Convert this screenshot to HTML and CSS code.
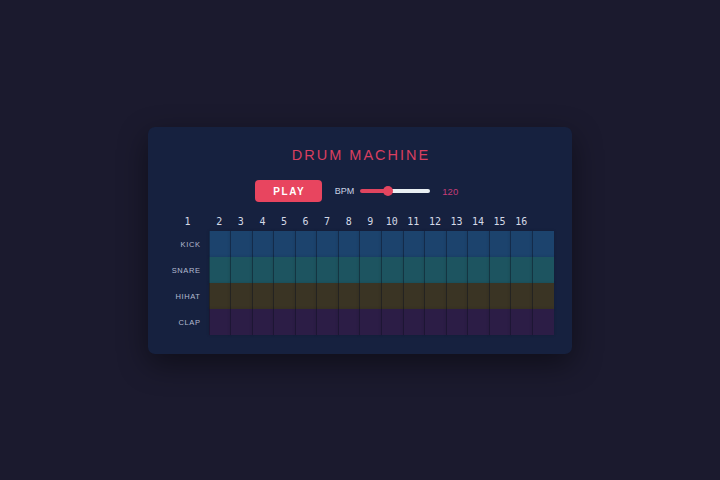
FILE: index.html
```html
<!DOCTYPE html>
<html>
<head>
<meta charset="utf-8">
<link rel="stylesheet" href="styles.css">
</head>
<body>
<div class="card">
  <h1 class="title">DRUM MACHINE</h1>
  <div class="controls">
    <button class="play">PLAY</button>
    <span class="bpm-label">BPM</span>
    <div class="slider">
      <div class="fill"></div>
      <div class="thumb"></div>
      <div class="rest"></div>
    </div>
    <span class="bpm-value">120</span>
  </div>
  <div class="grid" id="grid">
    <div class="num">1</div><div class="num">2</div><div class="num">3</div><div class="num">4</div><div class="num">5</div><div class="num">6</div><div class="num">7</div><div class="num">8</div><div class="num">9</div><div class="num">10</div><div class="num">11</div><div class="num">12</div><div class="num">13</div><div class="num">14</div><div class="num">15</div><div class="num">16</div><div class="num"></div>
    <div class="label">KICK</div>
    <div class="cell kick"></div><div class="cell kick"></div><div class="cell kick"></div><div class="cell kick"></div><div class="cell kick"></div><div class="cell kick"></div><div class="cell kick"></div><div class="cell kick"></div><div class="cell kick"></div><div class="cell kick"></div><div class="cell kick"></div><div class="cell kick"></div><div class="cell kick"></div><div class="cell kick"></div><div class="cell kick"></div><div class="cell kick"></div>
    <div class="label">SNARE</div>
    <div class="cell snare"></div><div class="cell snare"></div><div class="cell snare"></div><div class="cell snare"></div><div class="cell snare"></div><div class="cell snare"></div><div class="cell snare"></div><div class="cell snare"></div><div class="cell snare"></div><div class="cell snare"></div><div class="cell snare"></div><div class="cell snare"></div><div class="cell snare"></div><div class="cell snare"></div><div class="cell snare"></div><div class="cell snare"></div>
    <div class="label">HIHAT</div>
    <div class="cell hihat"></div><div class="cell hihat"></div><div class="cell hihat"></div><div class="cell hihat"></div><div class="cell hihat"></div><div class="cell hihat"></div><div class="cell hihat"></div><div class="cell hihat"></div><div class="cell hihat"></div><div class="cell hihat"></div><div class="cell hihat"></div><div class="cell hihat"></div><div class="cell hihat"></div><div class="cell hihat"></div><div class="cell hihat"></div><div class="cell hihat"></div>
    <div class="label">CLAP</div>
    <div class="cell clap"></div><div class="cell clap"></div><div class="cell clap"></div><div class="cell clap"></div><div class="cell clap"></div><div class="cell clap"></div><div class="cell clap"></div><div class="cell clap"></div><div class="cell clap"></div><div class="cell clap"></div><div class="cell clap"></div><div class="cell clap"></div><div class="cell clap"></div><div class="cell clap"></div><div class="cell clap"></div><div class="cell clap"></div>
  </div>
</div>
</body>
</html>
```
FILE: styles.css
```css
html, body {
  margin: 0;
  padding: 0;
  width: 720px;
  height: 480px;
  background: #1b1a2e;
  font-family: "Liberation Sans", Arial, sans-serif;
}
body {
  display: flex;
  align-items: flex-start;
  justify-content: center;
}
.card {
  margin-top: 127px;
  width: 388px;
  padding: 0 18px 19px 18px;
  background: #16213f;
  border-radius: 7px;
  box-shadow: 0 10px 30px rgba(0,0,0,0.45);
  display: flex;
  flex-direction: column;
  align-items: center;
}
.title {
  margin: 20px 0 0 0;
  font-weight: normal;
  font-size: 14.5px;
  line-height: 17px;
  letter-spacing: 2px;
  color: #d93f60;
  font-family: "Liberation Sans", Arial, sans-serif;
  padding-left: 2px;
}
.controls {
  margin-top: 16px;
  display: flex;
  align-items: center;
  margin-right: 7px;
}
.play {
  width: 67px;
  height: 22px;
  border: none;
  border-radius: 4px;
  background: #e8455f;
  color: #fff;
  font-family: "Liberation Sans", Arial, sans-serif;
  font-weight: bold;
  font-size: 10px;
  letter-spacing: 1.6px;
  padding: 0 0 0 2px;
}
.bpm-label {
  margin-left: 13px;
  font-size: 9px;
  color: #c9d1e4;
}
.slider {
  margin-left: 6px;
  width: 70px;
  height: 10px;
  display: flex;
  align-items: center;
  position: relative;
}
.fill {
  width: 28px;
  height: 4px;
  background: #e0455f;
  border-radius: 2px 0 0 2px;
}
.rest {
  flex: 1;
  height: 4px;
  background: #e9eff3;
  border-radius: 0 2px 2px 0;
}
.thumb {
  position: absolute;
  left: 23px;
  top: 0;
  width: 10px;
  height: 10px;
  border-radius: 50%;
  background: #e3455f;
}
.bpm-value {
  margin-left: 12px;
  font-size: 9.5px;
  color: #c43d78;
}
.grid {
  margin-top: 14px;
  width: 387px;
  display: grid;
  grid-template-columns: 42px repeat(16, 1fr);
  grid-template-rows: 15px repeat(4, 26px);
}
.num {
  text-align: center;
  font-family: "DejaVu Sans Mono", "Liberation Mono", monospace;
  font-size: 10px;
  line-height: 12px;
  color: #d4d9e6;
}
.label {
  font-size: 7.5px;
  letter-spacing: 0.6px;
  color: #b4bbd0;
  text-align: right;
  padding-right: 8px;
  align-self: center;
}
.cell {
  box-shadow: inset 1px 0 0 rgba(10,15,30,0.45), 0 0 3px rgba(0,0,0,0.15);
}
.kick { background: #1c436d; }
.snare { background: #1d5460; }
.hihat { background: #3a3424; }
.clap { background: #2c1d46; }
```
